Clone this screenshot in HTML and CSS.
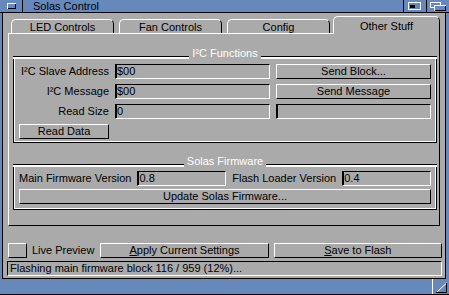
FILE: index.html
```html
<!DOCTYPE html>
<html lang="en">
<head>
    <meta charset="UTF-8">
    <title>Solas Control</title>
    <link rel="stylesheet" href="styles.css">
</head>
<body>
    <div class="window">
        <div class="titlebar">
            <div class="gadget close">
                <svg width="22" height="12" viewBox="0 0 22 12">
                    <rect x="7.5" y="3.5" width="8" height="5" fill="none" stroke="#fff"/>
                    <path d="M8 8.5h8M15.5 4v5" stroke="#000"/>
                </svg>
            </div>
            <div class="title">Solas Control</div>
            <div class="gadget zoom">
                <svg width="22" height="12" viewBox="0 0 22 12">
                    <rect x="4.5" y="2.5" width="12" height="7" fill="none" stroke="#fff"/>
                    <rect x="6" y="5" width="5" height="3" fill="#000"/>
                </svg>
            </div>
            <div class="gadget depth">
                <svg width="22" height="12" viewBox="0 0 22 12">
                    <rect x="3.5" y="2.5" width="10" height="5" fill="none" stroke="#fff"/>
                    <rect x="7.5" y="5.5" width="11" height="5" fill="#6688bb" stroke="#fff"/>
                    <path d="M8 10.5h11M18.5 6v5" stroke="#000"/>
                </svg>
            </div>
        </div>

        <div class="client">
            <div class="tabs">
                <div class="tab">LED Controls</div>
                <div class="tab">Fan Controls</div>
                <div class="tab">Config</div>
                <div class="tab active">Other Stuff</div>
            </div>

            <div class="panel">
                <div class="group-head"><span>I²C Functions</span></div>
                <div class="group i2c">
                    <div class="label">I²C Slave Address</div>
                    <div class="field">$00</div>
                    <div class="button">Send Block...</div>

                    <div class="label">I²C Message</div>
                    <div class="field">$00</div>
                    <div class="button">Send Message</div>

                    <div class="label">Read Size</div>
                    <div class="field">0</div>
                    <div class="field"></div>

                    <div class="button">Read Data</div>
                </div>

                <div class="group-head spaced"><span>Solas Firmware</span></div>
                <div class="group firmware">
                    <div class="version-row">
                        <div class="label">Main Firmware Version</div>
                        <div class="field">0.8</div>
                        <div class="label">Flash Loader Version</div>
                        <div class="field">0.4</div>
                    </div>
                    <div class="button">Update Solas Firmware...</div>
                </div>
            </div>

            <div class="actions">
                <div class="checkbox"></div>
                <div class="check-label">Live Preview</div>
                <div class="button wide"><u>A</u>pply Current Settings</div>
                <div class="button wide"><u>S</u>ave to Flash</div>
            </div>

            <div class="status">Flashing main firmware block 116 / 959 (12%)...</div>
        </div>

        <div class="footer">
            <div class="sizer">
                <svg width="16" height="15" viewBox="0 0 16 15">
                    <path d="M3.5 13.5L13.5 4" stroke="#fff"/>
                    <path d="M13.5 4v9.5H3" stroke="#000" fill="none"/>
                </svg>
            </div>
        </div>
    </div>
</body>
</html>
```

FILE: styles.css
```css
* {
    box-sizing: border-box;
}

body {
    margin: 0;
    font-family: "Liberation Sans", Arial, sans-serif;
    font-size: 11px;
    color: #000;
}

.window {
    width: 449px;
    height: 295px;
    background-color: #6688bb;
    display: flex;
    flex-direction: column;
}

/* title bar */

.titlebar {
    height: 13px;
    border-bottom: 1px solid #000;
    display: flex;
}

.gadget {
    width: 23px;
    height: 12px;
}

.gadget svg {
    display: block;
}

.close {
    border-right: 1px solid #000;
}

.zoom,
.depth {
    border-left: 1px solid #000;
}

.title {
    flex: 1;
    padding-left: 10px;
    line-height: 12px;
}

/* window contents */

.client {
    flex: 1;
    margin: 0 3px 0 2px;
    border: 1px solid #000;
    border-top: none;
    background-color: #aaaaaa;
    padding: 3px 3px 2px 4px;
    display: flex;
    flex-direction: column;
}

.tabs {
    height: 18px;
    margin: 0 2px -1px 1px;
    padding-left: 3px;
    display: flex;
    align-items: flex-end;
    gap: 5px;
}

.tab {
    width: 103px;
    height: 14px;
    margin-bottom: 1px;
    border-top: 1px solid #fff;
    border-left: 1px solid #fff;
    border-right: 1px solid #000;
    border-radius: 5px 5px 0 0;
    text-align: center;
    line-height: 14px;
}

.tab.active {
    flex: 1;
    height: 18px;
    margin: 0 0 0 -2px;
    padding-top: 2px;
    position: relative;
    z-index: 1;
    background-color: #aaaaaa;
}

.panel {
    margin: 0 2px 0 1px;
    border: 1px solid;
    border-color: #fff #000 #000 #fff;
    padding: 11px 2px 15px 4px;
}

.group-head {
    height: 14px;
    display: flex;
    align-items: flex-end;
}

.group-head.spaced {
    margin-top: 10px;
}

.group-head::before,
.group-head::after {
    content: '';
    flex: 1;
    height: 2px;
    border-top: 1px solid #000;
    background-color: #fff;
}

.group-head span {
    color: #fff;
    line-height: 12px;
    padding: 0 3px;
}

.group {
    border: 1px solid #000;
    border-top: none;
    box-shadow: inset 1px 0 0 #fff, inset -1px -1px 0 #fff;
}

.i2c {
    padding: 5px 5px 3px;
    display: grid;
    grid-template-columns: 90px 1fr 1fr;
    grid-auto-rows: 15px;
    column-gap: 6px;
    row-gap: 5px;
}

.firmware {
    padding: 4px 5px 5px;
    display: flex;
    flex-direction: column;
    gap: 3px;
}

.version-row {
    height: 15px;
    display: grid;
    grid-template-columns: auto 1fr auto 1fr;
    column-gap: 6px;
}

.label {
    justify-self: end;
    line-height: 15px;
    white-space: nowrap;
}

.field {
    height: 15px;
    border: 1px solid;
    border-color: #000 #fff #fff #000;
    box-shadow: inset 1px 0 0 #000;
    padding-left: 1px;
    line-height: 13px;
}

.button {
    height: 15px;
    border: 1px solid;
    border-color: #fff #000 #000 #fff;
    text-align: center;
    line-height: 13px;
    white-space: nowrap;
}

/* bottom controls */

.actions {
    height: 15px;
    margin-top: 17px;
    padding-left: 1px;
    display: flex;
    align-items: center;
}

.checkbox {
    width: 19px;
    height: 15px;
    border: 1px solid;
    border-color: #fff #000 #000 #fff;
}

.check-label {
    margin: 0 6px 0 5px;
    line-height: 15px;
}

.button.wide {
    flex: 1;
}

.button.wide + .button.wide {
    margin-left: 5px;
}

.status {
    height: 15px;
    margin-top: 3px;
    border: 1px solid;
    border-color: #000 #fff #fff #000;
    padding-left: 2px;
    line-height: 13px;
    white-space: nowrap;
    overflow: hidden;
}

.footer {
    height: 16px;
    border-bottom: 1px solid #000;
    display: flex;
    justify-content: flex-end;
}

.sizer {
    width: 17px;
    border-left: 1px solid #fff;
}

.sizer svg {
    display: block;
}
```
